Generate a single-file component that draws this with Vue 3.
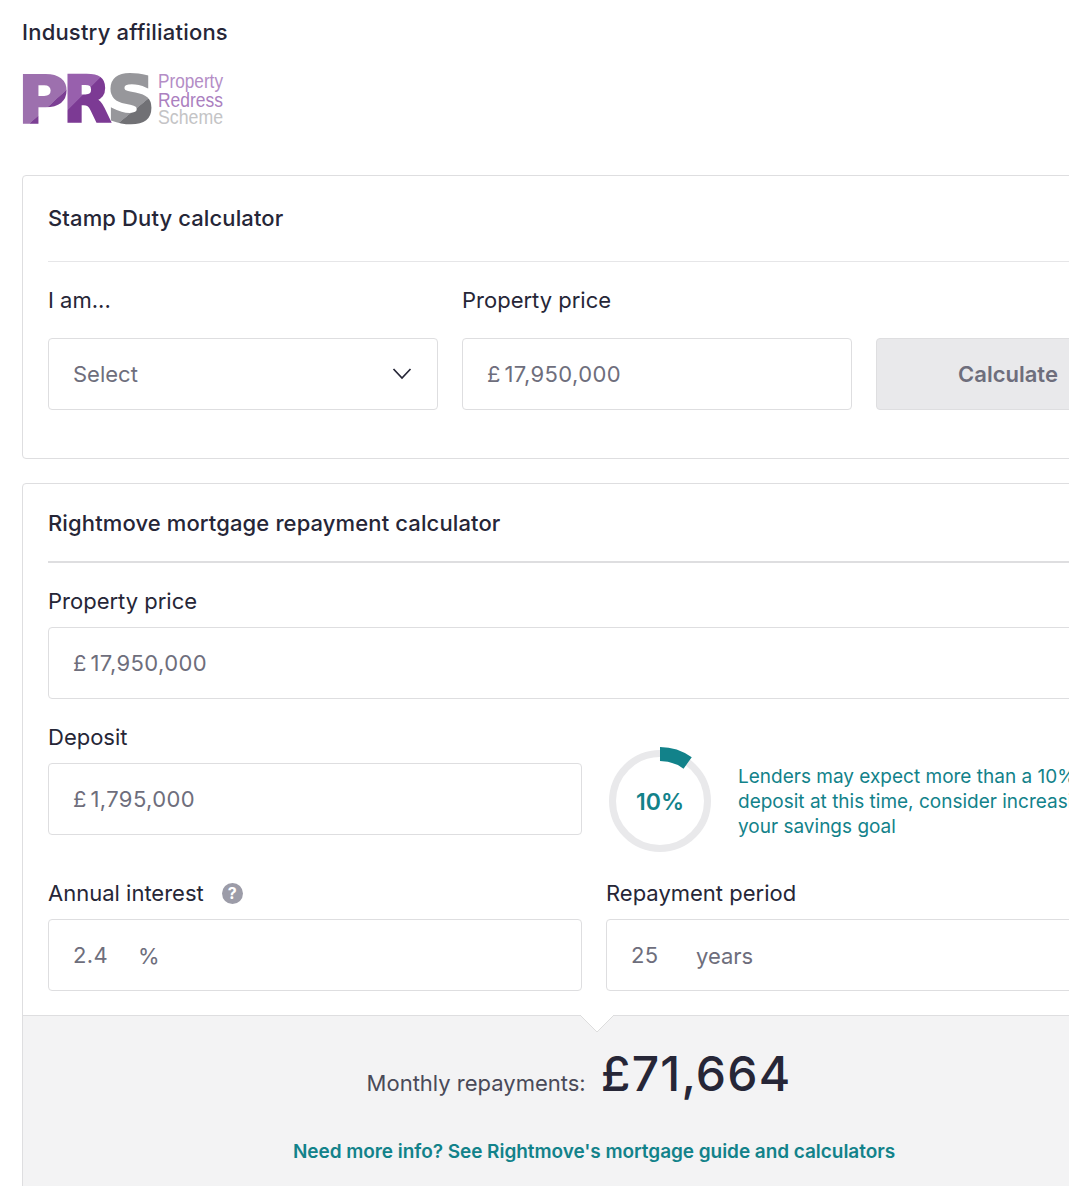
<template>
  <div class="page">
    <section class="affiliations">
      <h2 class="aff-title">Industry affiliations</h2>
      <!-- PRS logo -->
      <svg class="prs-logo" width="204" height="60" viewBox="0 0 204 60">
        <defs>
          <linearGradient id="prsP" gradientUnits="userSpaceOnUse" x1="20" y1="20" x2="42" y2="44">
            <stop offset="0.55" stop-color="#9d70ae" />
            <stop offset="0.56" stop-color="#7c3f94" />
          </linearGradient>
          <linearGradient id="prsR" gradientUnits="userSpaceOnUse" x1="62" y1="10" x2="88" y2="36">
            <stop offset="0.3" stop-color="#9860ad" />
            <stop offset="0.31" stop-color="#7c3a94" />
          </linearGradient>
          <linearGradient id="prsS" gradientUnits="userSpaceOnUse" x1="100" y1="18" x2="128" y2="52">
            <stop offset="0.6" stop-color="#97979b" />
            <stop offset="0.61" stop-color="#717175" />
          </linearGradient>
        </defs>
        <text x="-4" y="54" class="prs-big" fill="url(#prsP)" stroke="url(#prsP)" textLength="50" lengthAdjust="spacingAndGlyphs">P</text>
        <text x="41" y="54" class="prs-big" fill="url(#prsR)" stroke="url(#prsR)" textLength="48" lengthAdjust="spacingAndGlyphs">R</text>
        <text x="85" y="54" class="prs-big" fill="url(#prsS)" stroke="url(#prsS)" textLength="48" lengthAdjust="spacingAndGlyphs">S</text>
        <text x="136" y="20" class="prs-small" fill="#b48dc6" textLength="65" lengthAdjust="spacingAndGlyphs">Property</text>
        <text x="136" y="39" class="prs-small" fill="#ab80bf" textLength="65" lengthAdjust="spacingAndGlyphs">Redress</text>
        <text x="136" y="56" class="prs-small" fill="#c4c4c6" textLength="65" lengthAdjust="spacingAndGlyphs">Scheme</text>
      </svg>
    </section>

    <section class="card stamp">
      <h3 class="card-title">Stamp Duty calculator</h3>
      <div class="stamp-row">
        <div class="field">
          <label>I am...</label>
          <div class="input select">
            <span>Select</span>
            <svg width="20" height="14" viewBox="0 0 20 14">
              <path d="M1.5 2 L10 11 L18.5 2" fill="none" stroke="#262637" stroke-width="1.7" />
            </svg>
          </div>
        </div>
        <div class="field">
          <label>Property price</label>
          <div class="input"><span class="pound">£</span><span class="num">17,950,000</span></div>
        </div>
        <button class="calc-btn">Calculate</button>
      </div>
    </section>

    <section class="card mortgage">
      <h3 class="card-title heavy-line">Rightmove mortgage repayment calculator</h3>
      <div class="mortgage-body">
        <div class="field">
          <label>Property price</label>
          <div class="input"><span class="pound">£</span><span class="num">{{ price }}</span></div>
        </div>
        <div class="two-col">
          <div class="field">
            <label>Deposit</label>
            <div class="input"><span class="pound">£</span><span class="num">{{ deposit }}</span></div>
          </div>
          <div class="deposit-hint">
            <svg class="ring" width="108" height="108" viewBox="0 0 108 108">
              <circle cx="54" cy="54" r="47.5" fill="none" stroke="#e9e9eb" stroke-width="7" />
              <path :d="arcPath" fill="none" stroke="#12828a" stroke-width="14" />
              <text x="54" y="63" text-anchor="middle" class="ring-label">10%</text>
            </svg>
            <p>Lenders may expect more than a 10%<br />deposit at this time, consider increasing<br />your savings goal</p>
          </div>
        </div>
        <div class="two-col">
          <div class="field">
            <label>Annual interest <span class="help">?</span></label>
            <div class="input"><span class="val num">2.4</span><span class="unit">%</span></div>
          </div>
          <div class="field">
            <label>Repayment period</label>
            <div class="input"><span class="val num">25</span><span class="unit">years</span></div>
          </div>
        </div>
      </div>
      <div class="result">
        <svg class="notch" width="36" height="18" viewBox="0 0 36 18">
          <path d="M1 0 L18 17 L35 0 Z" fill="#fff" />
          <path d="M1 0 L18 17 L35 0" fill="none" stroke="#ddd" />
        </svg>
        <div class="monthly">
          <span class="monthly-label">Monthly repayments:</span>
          <span class="monthly-value">£71,664</span>
        </div>
        <a class="guide-link">Need more info? See Rightmove's mortgage guide and calculators</a>
        <div class="next-box"></div>
      </div>
    </section>
  </div>
</template>

<script setup>
const price = '17,950,000'
const deposit = '1,795,000'

// teal part of the ring, 10% of a full turn from 12 o'clock
const pct = 0.1
const angle = pct * 2 * Math.PI
const arcPath = `M54 7 A47 47 0 0 1 ${(54 + 47 * Math.sin(angle)).toFixed(2)} ${(54 - 47 * Math.cos(angle)).toFixed(2)}`
</script>

<style>
html,
body {
  margin: 0;
  background: #fff;
}
</style>

<style scoped>
.page {
  width: 1069px;
  height: 1186px;
  overflow: hidden;
  box-sizing: border-box;
  padding: 19px 0 0 22px;
  font-family: Inter, "Liberation Sans", sans-serif;
  color: #262637;
  font-size: 22px;
}

.aff-title {
  margin: 0;
  font-size: 22px;
  line-height: 27px;
  font-weight: 500;
  letter-spacing: 0.2px;
}

.prs-logo {
  display: block;
  overflow: visible;
  margin-top: 22px;
  margin-bottom: 47px;
}

.prs-big {
  font-family: "DejaVu Sans", sans-serif;
  font-size: 64px;
  font-weight: 700;
  stroke-width: 2.5px;
}

.prs-small {
  font-family: "Liberation Sans", sans-serif;
  font-size: 21px;
}

.card {
  width: 1144px;
  box-sizing: border-box;
  border: 1px solid #dedee0;
  border-radius: 4px;
  background: #fff;
}

.stamp {
  height: 284px;
  margin-bottom: 24px;
}

.mortgage {
  height: 760px;
}

.card-title {
  margin: 0 0 0 25px;
  height: 85px;
  line-height: 85px;
  font-size: 22px;
  font-weight: 500;
  letter-spacing: 0.12px;
  border-bottom: 1px solid #e6e6e8;
}

.card-title.heavy-line {
  height: 77px;
  line-height: 79px;
  border-bottom: 2px solid #dedee0;
}

.stamp-row {
  display: grid;
  grid-template-columns: 390px 390px 264px;
  gap: 24px;
  padding: 24px 25px 0;
  align-items: end;
}

.field label {
  display: flex;
  align-items: center;
  height: 28px;
  line-height: 28px;
  margin-bottom: 12px;
}

.stamp-row .field label {
  margin-bottom: 24px;
}

.input {
  display: flex;
  align-items: center;
  box-sizing: border-box;
  height: 72px;
  padding: 0 24px;
  border: 1px solid #dedee0;
  border-radius: 4px;
  color: #6e6e7c;
  background: #fff;
}

.select {
  justify-content: space-between;
  padding-right: 25px;
}

.pound {
  margin-right: 4px;
}

.num {
  letter-spacing: 0.4px;
}

.val {
  width: 65px;
}

.unit {
  padding-top: 2px;
}

.calc-btn {
  height: 72px;
  border: 1px solid #dedee0;
  border-radius: 4px;
  background: #e9e9eb;
  color: #6e6e7c;
  font: 600 22px Inter, "Liberation Sans", sans-serif;
}

.mortgage-body {
  padding: 24px 25px 0;
}

.two-col {
  display: grid;
  grid-template-columns: 534px 534px;
  gap: 24px;
  margin-top: 24px;
}

.help {
  display: inline-block;
  width: 21px;
  height: 21px;
  margin-left: 18px;
  border-radius: 50%;
  background: #9c9ca8;
  color: #fff;
  font-size: 16px;
  font-weight: 700;
  line-height: 21px;
  text-align: center;
}

.deposit-hint {
  display: flex;
  align-items: center;
  padding-top: 24px;
}

.ring {
  flex: none;
}

.ring-label {
  font-size: 23px;
  font-weight: 600;
  fill: #12828a;
}

.deposit-hint p {
  margin: 0 0 0 24px;
  font-size: 19px;
  line-height: 25px;
  white-space: nowrap;
  color: #12828a;
}

.result {
  position: relative;
  margin-top: 24px;
  height: 240px;
  background: #f3f3f4;
  border-top: 1px solid #dedee0;
  text-align: center;
}

.notch {
  position: absolute;
  top: -1px;
  left: 556px;
}

.monthly {
  display: flex;
  justify-content: center;
  align-items: baseline;
  gap: 15px;
  padding: 27px 30px 0 0;
}

.monthly-label {
  color: #4a4a58;
}

.monthly-value {
  font-size: 48px;
  line-height: 62px;
  letter-spacing: 1.2px;
  font-weight: 500;
}

.guide-link {
  display: block;
  margin-top: 34px;
  color: #12828a;
  font-weight: 600;
  font-size: 19px;
  letter-spacing: -0.05px;
  line-height: 26px;
}

/* next panel just starts at the bottom edge of the shot */
.next-box {
  margin: 21px 24px 0;
  height: 40px;
  background: #f6f6f7;
}
</style>
